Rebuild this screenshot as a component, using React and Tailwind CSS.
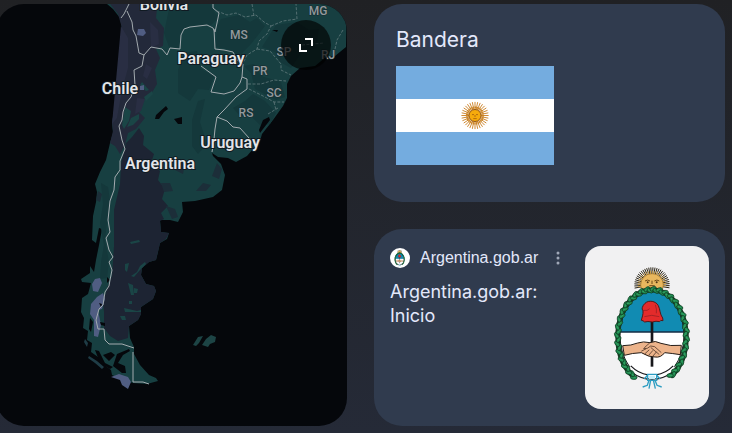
import React from "react";

const LAND =
  "M107 0 L107 4 L113 9 L120 18 L122 28 L121 50 L120 66 L118 85 L115 105 L112 123 L113 133 L110 143 L106 160 L100 172 L95 184 L97 192 L96 202 L93 216 L92 240 L96 243 L99 228 L102 229 L99 245 L96 260 L94 272 L90 266 L90 273 L81 279 L82 282 L91 283 L88 294 L82 298 L81 312 L84 318 L83 328 L88 331 L87 340 L92 343 L91 352 L98 357 L103 364 L111 370 L112 375 L122 380 L130 382 L133 383 L147 384 L158 381 L156 378 L149 375 L140 365 L134 354 L134 347 L130 338 L129 326 L138 320 L141 314 L141 307 L153 299 L156 291 L154 286 L146 284 L141 275 L142 268 L149 262 L156 260 L158 252 L160 243 L167 239 L169 233 L161 232 L160 220 L170 220 L178 222 L183 212 L182 202 L195 201 L213 197 L222 190 L225 175 L221 164 L213 156 L212 153 L218 157 L228 158 L236 162 L247 156 L260 141 L262 134 L273 120 L283 106 L287 98 L287 84 L291 76 L300 68 L315 66 L326 57 L335 56 L346 47 L347 0 Z";

const ANDES =
  "M107 0 L163 0 L157 8 L156 18 L164 28 L163 46 L156 49 L160 58 L155 70 L157 84 L150 96 L142 100 L139 112 L145 118 L136 129 L128 133 L125 145 L120 154 L115 146 L110 143 L113 131 L112 123 L116 98 L120 66 L122 28 L118 14 Z";

const PATAGONIA =
  "M126 143 L132 137 L139 128 L144 136 L143 145 L154 154 L151 163 L160 171 L158 180 L165 189 L162 199 L168 206 L161 213 L164 219 L160 221 L161 232 L169 233 L166 239 L160 243 L156 260 L149 262 L142 268 L141 275 L146 284 L154 286 L156 291 L153 299 L141 307 L141 314 L138 320 L129 326 L128 338 L118 341 L110 336 L104 328 L104 312 L103 302 L108 286 L112 276 L114 246 L114 210 L120 184 L121 164 Z";

const BORDERS = [
  "M129 4 L124 14 L121 18 M127 11 L132 22 L133 30 L136 36 L139 53 L144 55 L151 47 L162 49 L167 55 L170 48 L180 49 L181 35 L184 29 L190 27 L207 25 L213 28 L215 32 L217 23 L219 13 L213 8 L213 4",
  "M144 55 L142 66 L134 70 L135 85 L131 97 L126 103 L123 112 L122 120 L119 126 L122 140 L125 149 L120 161 L120 170 L115 177 L114 190 L110 201 L108 220 L110 232 L106 238 L109 250 L113 257 L109 262 L112 270 L110 280 L109 286 L105 292 L103 305 L99 309 L96 320 L98 329 L104 329 L105 340 L109 344 L122 344 L134 348",
  "M133 352 L133 382 L143 382 L149 384",
  "M214 29 L215 49 L224 50 L233 52 L238 61 L243 64 L242 77 L240 83 L234 91 L224 94 L211 92 L216 77 L201 66",
  "M242 77 L247 79 L247 89 L236 97 L224 110 L217 117 L227 121 L233 127 L240 128 L249 138 M217 117 L215 129 L214 139 L212 152",
];

const STATES =
  "M217 11 L227 15 L236 13 L245 17 L256 15 L264 22 L271 26 L267 34 L259 41 L257 49 L247 55 L243 63 M252 4 L254 16 M271 26 L283 21 L297 19 L296 4 M257 49 L270 51 L281 64 L281 70 L291 75 M248 84 L261 84 L274 80 L286 81 M249 89 L263 96 L274 102 L284 102 M274 102 L276 110 M268 114 L278 108 M343 30 L337 40 L335 49 M302 45 L324 43";

const FOREST =
  "M170 4 L210 4 L218 18 L211 25 L188 26 L181 34 L179 48 L169 47 L164 33 Z M221 19 L239 15 L250 22 L257 18 L265 26 L251 44 L238 57 L227 49 L216 47 L217 26 Z M276 25 L297 22 L309 30 L319 29 L316 48 L301 53 L291 68 L280 62 L275 52 L262 47 Z M184 53 L197 51 L201 69 L214 76 L209 90 L198 89 L190 101 L178 93 L178 70 Z M244 66 L254 64 L261 76 L281 82 L285 97 L276 100 L255 89 L251 73 Z M245 101 L253 94 L265 101 L276 113 L270 124 L261 126 L251 116 L240 116 L233 108 Z M192 120 L198 101 L205 99 L200 122 L207 144 L198 154 L192 146 Z";

const FLECKS =
  "M178 159 l7 5 l-2 10 l-8 -4 Z M161 183 l9 0 l3 8 l-9 1 Z M166 206 l9 3 l3 8 l-6 2 Z M217 163 l5 6 l-3 10 l-7 -3 Z M203 183 l8 2 l-5 6 l-10 0 Z M98 191 l4 3 l-2 8 l-4 -2 Z";

const GREEN_FLECKS =
  "M130 242 l9 -2 l1 2 l-9 2 Z M125 264 l4 -1 l-2 9 l-2 -2 Z M131 276 l6 -4 l3 -6 l5 -4 l1 2 l-6 6 l-6 7 Z M128 283 l5 2 l1 10 l-3 0 Z M134 288 l4 1 l-1 4 l-3 0 Z M124 308 l13 3 l4 -1 l0 2 l-16 0 Z M120 316 l5 0 l1 4 l-4 0 Z M125 107 l6 4 l-2 10 l-5 8 l-2 -4 Z M139 119 l-6 6 l-6 2 l4 -9 l8 -4 Z M144 97 l8 -6 l1 3 l-7 7 Z M142 82 l7 8 l-3 1 l-6 -6 Z M129 301 l3 0 l0 3 l-3 0 Z";

const ICE =
  "M95 279 L100 278 L102 283 L98 292 L93 291 L92 284 Z M103 293 L105 299 L102 309 L98 310 L101 325 L98 337 L94 336 L94 320 L90 314 L91 304 L97 297 Z M111 377 L119 374 L128 377 L131 382 L128 389 L122 385 L120 380 Z M138 29 L144 29 L146 33 L143 36 L137 35 Z M140 86 L144 85 L144 90 L140 90 Z";

function LabelText({ x, y, children }) {
  return (
    <text
      x={x}
      y={y}
      textAnchor="middle"
      className="fill-[#e3e5e8] stroke-[#101a22] stroke-2 text-base font-semibold [paint-order:stroke]"
    >
      {children}
    </text>
  );
}

function StateText({ x, y, children }) {
  return (
    <text
      x={x}
      y={y}
      textAnchor="middle"
      className="fill-[#939a9d] stroke-[#16292e] stroke-1 text-xs font-medium [paint-order:stroke]"
    >
      {children}
    </text>
  );
}

function MapDrawing() {
  return (
    <svg
      viewBox="-4 4 351 422"
      preserveAspectRatio="xMidYMid slice"
      className="block h-full w-full font-['Roboto',sans-serif]"
      role="img"
      aria-label="Mapa de Argentina"
    >
      <path d={LAND} fill="#173f41" />
      <path d={FOREST} fill="#14383b" />
      <path d={ANDES} fill="#23293a" />
      <path
        d="M121 26 l7 12 l0 30 l-6 22 l-5 28 l-5 6 Z M150 22 l8 8 l1 14 l-8 4 Z M146 64 l6 4 l-5 11 l-4 -3 Z M137 98 l8 1 l-4 12 l-6 3 Z"
        fill="#292e43"
      />
      <path d={PATAGONIA} fill="#1d2433" />
      <path d={FLECKS} fill="#1c2e39" />
      <path d={GREEN_FLECKS} fill="#1a4546" />
      <path
        d="M101 183 L108 187 L110 201 L107 222 L105 240 L109 262 L107 278 L100 279 L101 262 L104 245 L100 223 L103 204 Z"
        fill="#14383b"
      />
      <path d={ICE} fill="#505d82" />
      <path
        d="M156 115 l10 -9 l2 3 l-4 3 l-5 7 l-4 0 Z M174 119 l8 -2 l0 7 l-4 0 Z M263 120 l6 -3 l1 3 l-7 9 l-3 4 l-1 -3 Z M103 355 l8 -3 l4 3 l-6 6 Z M117 354 l12 -5 l1 2 l-7 4 l-5 8 l7 3 l1 7 l-4 0 l-9 -7 Z M272 30 l6 0 l-1 2 Z M95 350 l4 1 l6 12 l8 4 l-3 2 l-10 -6 Z M90 318 l3 4 l-2 10 l-2 -3 Z M99 303 l3 1 l-1 3 Z M107 277 l3 3 l-3 3 Z M100 322 l5 1 l0 3 l-4 -1 Z"
        fill="#05070b"
      />
      <path d="M89 356 l8 5 l7 6 l-2 2 l-7 -6 l-7 -5 Z M85 339 l3 4 l-1 4 l-3 -5 Z" fill="#1f3c46" />
      <path
        d="M193 345 L198 337 L203 336 L199 343 L196 346 Z M206 339 L211 335 L216 337 L215 342 L210 344 L208 347 L202 345 Z"
        fill="#1d4445"
      />
      {BORDERS.map((d) => (
        <path key={d} d={d} fill="none" stroke="#a3abaf" strokeWidth="1" strokeLinejoin="round" />
      ))}
      <path d={STATES} fill="none" stroke="#6e8487" strokeWidth="0.7" strokeDasharray="3 1.5" />
      <LabelText x="164" y="10">Bolivia</LabelText>
      <LabelText x="211" y="64">Paraguay</LabelText>
      <LabelText x="120" y="94">Chile</LabelText>
      <LabelText x="230" y="148">Uruguay</LabelText>
      <LabelText x="160" y="169">Argentina</LabelText>
      <StateText x="318" y="15">MG</StateText>
      <StateText x="239" y="39">MS</StateText>
      <StateText x="284" y="56">SP</StateText>
      <StateText x="328" y="59">RJ</StateText>
      <StateText x="260" y="75">PR</StateText>
      <StateText x="274" y="97">SC</StateText>
      <StateText x="246" y="117">RS</StateText>
    </svg>
  );
}

function rays(cx, cy, r1, r2, from, to, count) {
  return Array.from({ length: count }, (_, i) => {
    const a = ((from + ((to - from) * i) / count) * Math.PI) / 180;
    const c = Math.cos(a);
    const s = Math.sin(a);
    return `M${cx + r1 * c} ${cy + r1 * s} L${cx + r2 * c} ${cy + r2 * s}`;
  }).join(" ");
}

function Flag() {
  return (
    <svg viewBox="0 0 158 99" className="block w-[158px]" role="img" aria-label="Bandera de Argentina">
      <rect width="158" height="99" fill="#74acdf" />
      <rect y="33" width="158" height="33" fill="#fff" />
      <path d={rays(79, 49.5, 6, 13.6, 0, 360, 32)} stroke="#cf8a35" strokeWidth="1" />
      <circle cx="79" cy="49.5" r="8" fill="none" stroke="#c98325" strokeWidth="2" strokeDasharray="1.2 0.5" />
      <circle cx="79" cy="49.5" r="6" fill="#f6ab0c" stroke="#96560f" strokeWidth="1" />
      <path d="M76 48.6h2M80 48.6h2M79 49v2M77.3 52.6h3.4" stroke="#a45e0c" strokeWidth="0.8" />
    </svg>
  );
}

const LEAVES = Array.from({ length: 60 }, (_, i) => {
  const deg = 122 + (i * 296) / 59;
  const a = (deg * Math.PI) / 180;
  return { x: 126 + 103 * Math.cos(a), y: 230 + 141 * Math.sin(a), deg, side: i % 2 ? 1 : -1 };
});

function Emblem({ className }) {
  return (
    <svg viewBox="0 0 252 402" className={className} role="img" aria-label="Escudo de Argentina">
      <path d={rays(126, 75, 30, 53, 170, 376, 30)} stroke="#292315" strokeWidth="3" />
      <path d={rays(126, 75, 28, 43, 173, 373, 20)} stroke="#d5a64d" strokeWidth="3" />
      <circle cx="126" cy="75" r="34" fill="#e8b75e" stroke="#9b7028" strokeWidth="2" />
      <path d="M105 63q8-6 15 0M133 63q8-6 15 0M126 62v10M118 77h16" fill="none" stroke="#6f4a18" strokeWidth="3" />
      <circle cx="113" cy="67" r="3" fill="#4d3513" />
      <circle cx="140" cy="67" r="3" fill="#4d3513" />
      <ellipse cx="126" cy="226" rx="96" ry="132" fill="#fff" />
      <path d="M30 216A96 132 0 0 1 222 216Z" fill="#118bb2" />
      <path d="M31 216H221" stroke="#152c45" strokeWidth="4" />
      <ellipse cx="126" cy="226" rx="96" ry="132" fill="none" stroke="#1b1b20" strokeWidth="3" />
      <path d="M58 322Q82 346 113 351M194 322Q170 346 139 351" fill="none" stroke="#17171b" strokeWidth="16" />
      <path d="M58 322Q82 346 113 351M194 322Q170 346 139 351" fill="none" stroke="#fff" strokeWidth="9" />
      <path d="M122 178h8v142h-8Z" fill="#17171b" />
      <path
        d="M94 181C96 171 100 166 99 150C94 151 96 138 105 130C116 119 138 123 145 137C151 149 149 162 158 174L159 182Q151 179 149 185Q138 182 127 186Q112 183 104 186Q99 181 94 181Z"
        fill="#e32b2b"
        stroke="#551717"
        strokeWidth="3"
      />
      <path d="M101 151Q112 154 119 146M103 170Q125 162 148 170M136 134Q141 148 139 160" fill="none" stroke="#8b1c20" strokeWidth="2" />
      <path
        d="M38 257Q64 257 83 249Q100 243 120 248Q135 240 153 250Q181 260 214 256L211 284Q186 280 164 278Q152 294 135 291Q117 292 94 278Q67 279 43 286Z"
        fill="#edb48b"
        stroke="#251d18"
        strokeWidth="3"
      />
      <path
        d="M118 250Q107 258 101 266Q112 268 122 258L134 260L153 277M95 273L107 267M105 281L117 270M116 286L128 272M129 288L139 276M123 263L147 283"
        fill="none"
        stroke="#553b2a"
        strokeWidth="2.5"
        strokeLinecap="round"
      />
      <path d="M71 350A103 141 0 1 1 181 350" fill="none" stroke="#173b24" strokeWidth="15" />
      {LEAVES.map(({ x, y, deg, side }) => (
        <g key={deg} transform={`translate(${x} ${y}) rotate(${deg + 90 + side * 28})`}>
          <ellipse rx="10" ry="6" cy={side * 3} fill="#1d8a50" stroke="#12361f" strokeWidth="2" />
          <path d={`M-6 ${side * 3}h10`} stroke="#3fa968" strokeWidth="2" />
        </g>
      ))}
      <path
        d="M113 343h27v18h-27ZM117 361L112 376L98 381M135 361L141 376L155 381M122 360L117 386M130 360L136 386M113 345L103 357M140 345L150 357"
        fill="none"
        stroke="#2d9dc2"
        strokeWidth="4"
      />
      <path d="M117 347h18v10h-18Z" fill="#c7edf8" />
    </svg>
  );
}

export default function App() {
  return (
    <main className="flex min-h-screen gap-[27px] overflow-hidden bg-linear-to-b from-[#202124] to-[#252a37] pt-1 pr-[7px] pb-[7px] font-['Inter',sans-serif] text-[#e3e8fb]">
      <section className="relative -ml-1 min-w-0 flex-1 overflow-hidden rounded-[28px] bg-[#05070b]">
        <MapDrawing />
        <button
          type="button"
          aria-label="Ampliar mapa"
          className="absolute top-4 right-4 flex size-[50px] items-center justify-center rounded-full bg-black/65"
        >
          <svg viewBox="0 0 16 16" className="size-4" fill="none" stroke="#fff" strokeWidth="2">
            <path d="M7 2h7v7M2 7v7h7" />
          </svg>
        </button>
      </section>

      <div className="grid w-[351px] shrink-0 grid-rows-2 gap-[27px]">
        <section className="rounded-[28px] bg-[#303b4e] px-[22px] pt-[21px]">
          <h2 className="mb-[11px] text-[21px] leading-[30px]">Bandera</h2>
          <Flag />
        </section>

        <article className="flex justify-between rounded-[28px] bg-[#303b4e] px-4 py-[17px]">
          <div className="min-w-0 flex-1">
            <div className="flex items-center">
              <span className="flex size-5 shrink-0 items-center justify-center overflow-hidden rounded-full bg-white">
                <Emblem className="h-[18px]" />
              </span>
              <a href="#sitio" className="ml-2.5 font-['Liberation_Sans',sans-serif] text-base leading-6">
                Argentina.gob.ar
              </a>
              <button type="button" aria-label="Más opciones" className="ml-[18px] flex h-6 w-1 items-center justify-center">
                <svg viewBox="0 0 4 14" className="h-3.5 w-1 shrink-0" fill="#a0a8b8">
                  <circle cx="2" cy="2" r="1.5" />
                  <circle cx="2" cy="7" r="1.5" />
                  <circle cx="2" cy="12" r="1.5" />
                </svg>
              </button>
            </div>
            <h3 className="mt-2.5 max-w-40 text-lg leading-6">
              <a href="#inicio">Argentina.gob.ar: Inicio</a>
            </h3>
          </div>
          <div className="flex w-[124px] shrink-0 items-center justify-center rounded-2xl bg-[#f1f1f2] pl-2.5">
            <Emblem className="h-[134px]" />
          </div>
        </article>
      </div>
    </main>
  );
}
